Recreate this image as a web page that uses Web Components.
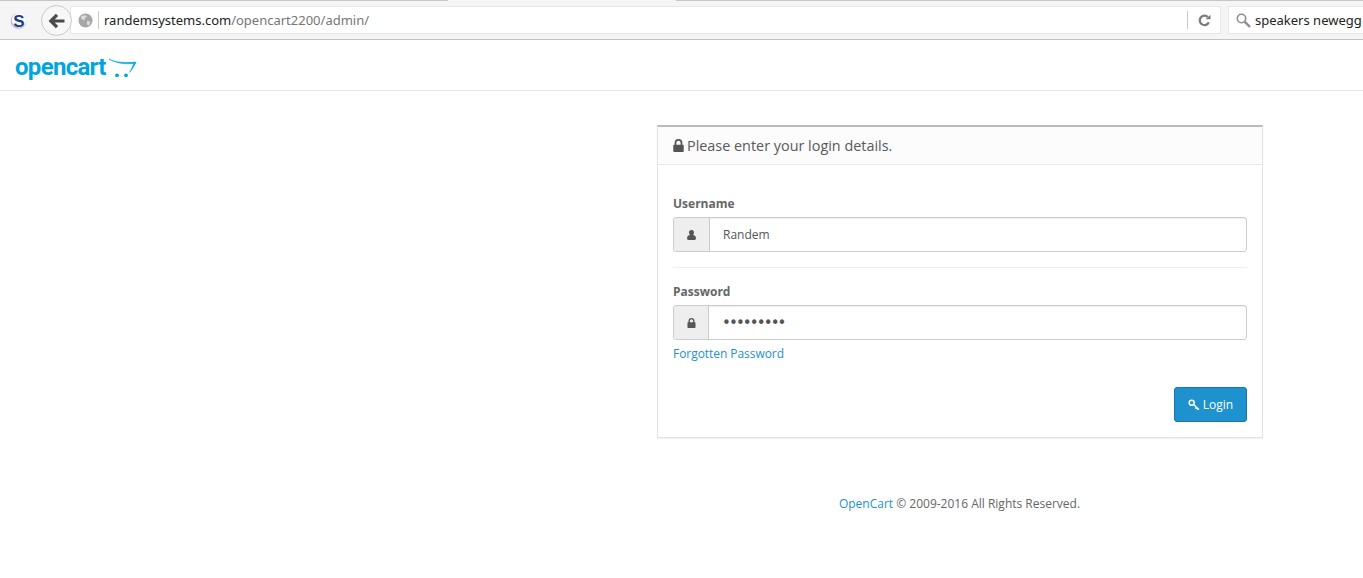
<!DOCTYPE html>
<html lang="en">
<head>
<meta charset="UTF-8">
<title>OpenCart admin login</title>
<style>
    html, body { margin: 0; padding: 0; background: #fff; }
    body { width: 1363px; height: 578px; overflow: hidden; font-family: "Open Sans", sans-serif; }
</style>
</head>
<body>
<browser-bar url-host="randemsystems.com" url-path="/opencart2200/admin/" search="speakers newegg"></browser-bar>
<site-header></site-header>
<login-page></login-page>

<script>
    const ICONS = {
        lock: { box: '1.6 0.2 10.8 13.4', d: '<path d="M3 6V4.2a4 4 0 0 1 8 0V6h.4c.6 0 1 .4 1 1v5.6c0 .6-.4 1-1 1H2.600c-.6 0-1-.4-1-1V7c0-.6.4-1 1-1zm1.800 0h4.400V4.200a2.200 2.200 0 0 0-4.400 0z"/>' },
        user: { box: '1.5 1 11 12', d: '<path d="M7 1a3 3 0 0 1 3 3.200c0 1.100-.5 2.200-1.300 2.800 2.300.4 3.800 1.500 3.800 3.900 0 1.300-.8 2.100-2 2.100H3.500c-1.200 0-2-.8-2-2.100 0-2.400 1.500-3.500 3.800-3.900C4.500 6.400 4 5.300 4 4.200A3 3 0 0 1 7 1z"/>' }
    };

    // Browser toolbar above the page
    class BrowserBar extends HTMLElement {
        constructor() {
            super();
            this.attachShadow({ mode: 'open' });
            this.shadowRoot.innerHTML = `
                <style>
                    :host { display: block; height: 40px; box-sizing: border-box; background: #f5f5f5; position: relative;
                            border-top: 1px solid #c6c6c6; border-bottom: 1px solid #c4c4c4;
                            font-family: "Noto Sans", sans-serif; font-size: 13px; color: #222; }
                    .tab { position: absolute; left: 448px; top: -1px; width: 228px; height: 1px; background: #f5f5f5; }
                    .row { display: flex; align-items: center; height: 38px; position: relative; padding-left: 10px; box-sizing: border-box; }
                    .ext { width: 17px; height: 17px; flex: none; }
                    .back { position: absolute; left: 41px; top: 4px; width: 31px; height: 31px; box-sizing: border-box;
                            border: 1px solid #c9c9c9; border-radius: 50%; background: #f7f7f7;
                            display: flex; align-items: center; justify-content: center; z-index: 1; }
                    .url { margin-left: 43px; width: 1151px; height: 28px; box-sizing: border-box; background: #fff;
                           border: 1px solid #e6e6e6; display: flex; align-items: center; flex: none; padding-left: 7px; }
                    .globe { width: 15px; height: 15px; flex: none; }
                    .sep { width: 1px; height: 18px; background: #c8c8c8; flex: none; }
                    .text { margin-left: 5px; flex: 1; white-space: nowrap; }
                    .path { color: #767676; }
                    .reload { width: 32px; display: flex; justify-content: center; flex: none; }
                    .search { margin-left: 7px; flex: 1; height: 28px; box-sizing: border-box; background: #fff;
                              border: 1px solid #e6e6e6; border-right: 0; display: flex; align-items: center; padding-left: 7px; white-space: nowrap; overflow: hidden; }
                    .search svg { flex: none; margin-right: 4px; }
                </style>
                <div class="tab"></div>
                <div class="row">
                    <svg class="ext" viewBox="0 0 17 17">
                        <circle cx="8.500" cy="9" r="7.800" fill="#aab3cf"/>
                        <circle cx="9" cy="8.400" r="7.300" fill="#fbfbfd"/>
                        <text x="9" y="14.500" text-anchor="middle" font-family="Liberation Sans" font-weight="700" font-size="17" fill="#1c3a86">S</text>
                    </svg>
                    <div class="back">
                        <svg width="18" height="16" viewBox="0 0 18 16" fill="none" stroke="#4a4a4a" stroke-width="3.200">
                            <path d="M16.500 8H3M9 1.800 2.800 8 9 14.200"/>
                        </svg>
                    </div>
                    <div class="url">
                        <svg class="globe" viewBox="0 0 15 15">
                            <circle cx="7.500" cy="7.500" r="7" fill="#a6a6a6"/>
                            <path d="M3 3.500 7 2l2 1.500L7 5 6.500 7.500 3.500 6zM9 8l3.500.5L11 12.500 9 11.500z" fill="#dcdcdc"/>
                        </svg>
                        <div class="sep" style="margin-left:5px"></div>
                        <div class="text">${this.getAttribute('url-host')}<span class="path">${this.getAttribute('url-path')}</span></div>
                        <div class="sep"></div>
                        <div class="reload">
                            <svg width="13" height="13" viewBox="0 0 13 13" fill="none" stroke="#7b7b7b" stroke-width="2.300">
                                <path d="M10.800 8.200A4.700 4.700 0 1 1 9.800 3"/>
                                <path d="M7.500 5.200h5V.8z" fill="#7b7b7b" stroke="none"/>
                            </svg>
                        </div>
                    </div>
                    <div class="search">
                        <svg width="15" height="15" viewBox="0 0 15 15" fill="none" stroke="#8c8c8c">
                            <circle cx="5.500" cy="5.500" r="4.200" stroke-width="1.600"/>
                            <path d="M8.800 8.800 14 14" stroke-width="2.400"/>
                        </svg>
                        ${this.getAttribute('search')}
                    </div>
                </div>
            `;
        }
    }

    // Top bar of the admin page with the logo
    class SiteHeader extends HTMLElement {
        constructor() {
            super();
            this.attachShadow({ mode: 'open' });
            this.shadowRoot.innerHTML = `
                <style>
                    :host { display: block; height: 51px; box-sizing: border-box; border-bottom: 1px solid #e8e8e8; background: #fff; }
                    .logo { display: flex; align-items: flex-start; padding: 12px 0 0 15px; }
                    .word { font-family: "Roboto", sans-serif; font-weight: 700; font-size: 24px; line-height: 30px;
                            color: #00a5dd; letter-spacing: -.7px; }
                    svg { margin: 6px 0 0 2px; }
                </style>
                <div class="logo">
                    <span class="word">opencart</span>
                    <svg width="29" height="20" viewBox="0 0 29 20" fill="none">
                        <path d="M1 1c6 3.500 16 4 27 3-.5 2-4 8-6.500 10.500 1.500-3 3.500-6.500 4.300-9C16 6.500 7 5 1 1z" fill="#00a5dd" stroke="#00a5dd" stroke-width=".5"/>
                        <circle cx="9" cy="17.300" r="1.900" fill="#00a5dd"/>
                        <circle cx="18" cy="17.300" r="1.900" fill="#00a5dd"/>
                    </svg>
                </div>
            `;
        }
    }

    // Input with an icon box in front of it
    class IconField extends HTMLElement {
        constructor() {
            super();
            this.attachShadow({ mode: 'open' });
            const addon = this.getAttribute('addon') || '36';
            const icon = ICONS[this.getAttribute('icon')];
            this.shadowRoot.innerHTML = `
                <style>
                    :host { display: flex; height: 35px; box-sizing: border-box; border: 1px solid #ccc; border-radius: 3px;
                            background: #fff; box-shadow: inset 0 1px 1px rgba(0,0,0,.075); font-size: 12px; color: #555; }
                    .addon { width: ${addon}px; flex: none; box-sizing: border-box; background: #eee; border-right: 1px solid #ccc;
                             border-radius: 2px 0 0 2px; display: flex; align-items: center; justify-content: center; }
                    svg { fill: #555; }
                    .value { flex: 1; display: flex; align-items: center; padding-left: 13px; }
                </style>
                <div class="addon"><svg width="9" height="10" viewBox="${icon.box}">${icon.d}</svg></div>
                <div class="value"><slot></slot></div>
            `;
        }
    }

    // The login panel
    class LoginCard extends HTMLElement {
        constructor() {
            super();
            this.attachShadow({ mode: 'open' });
            this.shadowRoot.innerHTML = `
                <style>
                    :host { display: block; width: 606px; height: 313px; box-sizing: border-box; background: #fff;
                            border: 1px solid #e3e3e3; border-top: 2px solid #bbb; box-shadow: 0 1px 1px rgba(0,0,0,.05);
                            font-size: 12px; color: #666; }
                    .head { height: 38px; box-sizing: border-box; background: #fcfcfc; border-bottom: 1px solid #e8e8e8;
                            display: flex; align-items: center; padding-left: 15px; font-size: 14.400px; color: #595959; }
                    .head svg { fill: #555; margin-right: 3px; }
                    .body { padding: 30px 15px 0; }
                    label { display: block; font-weight: 700; font-size: 12px; line-height: 17px; margin-bottom: 5px; color: #666; }
                    hr { border: 0; border-top: 1px solid #eee; margin: 15px 0 15px; }
                    .dots { font-size: 15px; letter-spacing: -1.900px; color: #555; font-family: "DejaVu Sans", sans-serif; }
                    a { display: block; color: #1e91cf; text-decoration: none; line-height: 17px; margin-top: 5px; font-size: 12px; letter-spacing: -.05px; }
                    .actions { display: flex; justify-content: flex-end; margin-top: 25px; }
                    button { width: 73px; height: 35px; background: #1e91cf; border: 1px solid #1978ab; border-radius: 3px; color: #fff;
                             font: 12px "Open Sans", sans-serif; display: flex; align-items: center; justify-content: center; gap: 3px; padding: 0; }
                </style>
                <div class="head">
                    <svg width="11" height="13" viewBox="${ICONS.lock.box}">${ICONS.lock.d}</svg>
                    Please enter your login details.
                </div>
                <div class="body">
                    <label>Username</label>
                    <icon-field icon="user" addon="36">Randem</icon-field>
                    <hr>
                    <label>Password</label>
                    <icon-field icon="lock" addon="35"><span class="dots">•••••••••</span></icon-field>
                    <a>Forgotten Password</a>
                    <div class="actions">
                        <button>
                            <svg width="12" height="12" viewBox="0 0 12 12" fill="none" stroke="#fff">
                                <circle cx="3.700" cy="3.700" r="2.500" stroke-width="1.500"/>
                                <path d="M5.500 5.500 11 10.500M8.500 8l-1.200 1.500M10.300 9.500l-1 1.200" stroke-width="1.300"/>
                            </svg>
                            Login
                        </button>
                    </div>
                </div>
            `;
        }
    }

    // Page content below the header: panel and footer line
    class LoginPage extends HTMLElement {
        constructor() {
            super();
            this.attachShadow({ mode: 'open' });
            this.shadowRoot.innerHTML = `
                <style>
                    :host { display: block; padding: 34px 100px 0 0; }
                    .col { width: 606px; margin-left: auto; }
                    footer { margin-top: 57px; text-align: center; font-size: 12px; line-height: 17px; color: #666; padding-right: 1px; }
                    a { color: #1e91cf; text-decoration: none; }
                </style>
                <div class="col">
                    <login-card></login-card>
                    <footer><a>OpenCart</a> © 2009-2016 All Rights Reserved.</footer>
                </div>
            `;
        }
    }

    customElements.define('browser-bar', BrowserBar);
    customElements.define('site-header', SiteHeader);
    customElements.define('icon-field', IconField);
    customElements.define('login-card', LoginCard);
    customElements.define('login-page', LoginPage);
</script>
</body>
</html>
